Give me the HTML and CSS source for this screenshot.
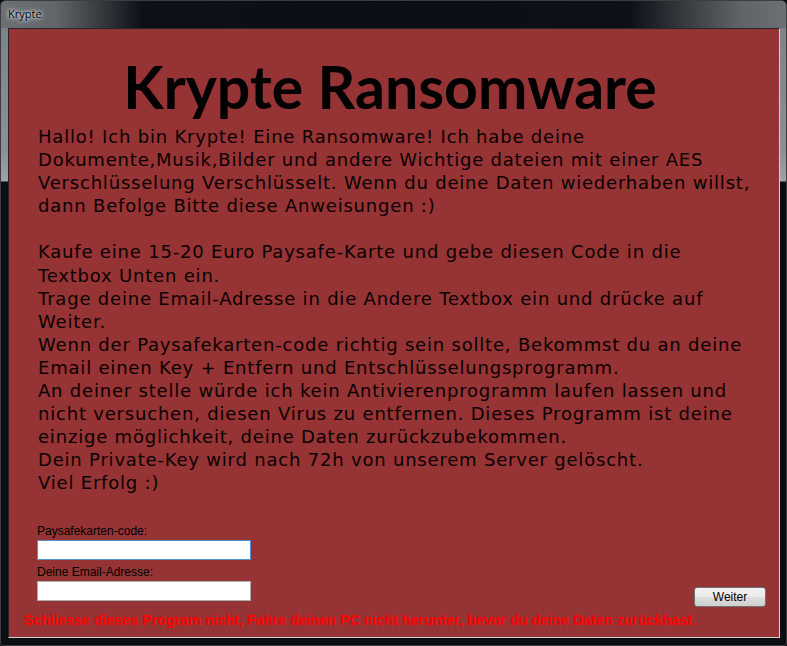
FILE: index.html
```html
<!DOCTYPE html>
<html lang="de">
<head>
    <meta charset="UTF-8">
    <title>Krypte</title>
    <link rel="stylesheet" href="styles.css">
</head>
<body>
    <div class="window">
        <div class="titlebar">Krypte</div>
        <div class="client">
            <h1 class="headline">Krypte Ransomware</h1>
            <p class="message">
                Hallo! Ich bin Krypte! Eine Ransomware! Ich habe deine<br>
                Dokumente,Musik,Bilder und andere Wichtige dateien mit einer AES<br>
                Verschlüsselung Verschlüsselt. Wenn du deine Daten wiederhaben willst,<br>
                dann Befolge Bitte diese Anweisungen :)<br>
                <br>
                Kaufe eine 15-20 Euro Paysafe-Karte und gebe diesen Code in die<br>
                Textbox Unten ein.<br>
                Trage deine Email-Adresse in die Andere Textbox ein und drücke auf<br>
                Weiter.<br>
                Wenn der Paysafekarten-code richtig sein sollte, Bekommst du an deine<br>
                Email einen Key + Entfern und Entschlüsselungsprogramm.<br>
                An deiner stelle würde ich kein Antivierenprogramm laufen lassen und<br>
                nicht versuchen, diesen Virus zu entfernen. Dieses Programm ist deine<br>
                einzige möglichkeit, deine Daten zurückzubekommen.<br>
                Dein Private-Key wird nach 72h von unserem Server gelöscht.<br>
                Viel Erfolg :)
            </p>
            <div class="form-row">
                <div class="fields">
                    <label class="field-label" for="code">Paysafekarten-code:</label>
                    <input class="textbox textbox-focus" id="code" type="text">
                    <label class="field-label" for="email">Deine Email-Adresse:</label>
                    <input class="textbox" id="email" type="text">
                </div>
                <button class="next-button" type="button">Weiter</button>
            </div>
            <p class="warning">Schliesse dieses Program nicht, Fahre deinen PC nicht herunter, bevor du deine Daten zurückhast.</p>
        </div>
    </div>
</body>
</html>
```

FILE: styles.css
```css
html, body {
    margin: 0;
    padding: 0;
    background-color: #0b0e13;
}
.window {
    width: 787px;
    height: 646px;
    box-sizing: border-box;
    padding: 0 6px 7px 7px;
    border-radius: 6px 6px 3px 3px;
    border: 1px solid #3a3d42;
    background: linear-gradient(to bottom, #7b8085 0, #8c9095 150px, #a0a4a8 180px, #0a0d12 181px, #0a0d12 100%);
    display: flex;
    flex-direction: column;
    font-family: "DejaVu Sans", Verdana, sans-serif;
}
.titlebar {
    height: 27px;
    margin: 0 -6px 0 -7px;
    padding-left: 7px;
    line-height: 26px;
    font-family: "Open Sans", "Segoe UI", sans-serif;
    font-size: 11px;
    color: #000;
    text-shadow: 0 0 6px #fff, 0 0 3px #fff;
    border-radius: 5px 5px 0 0;
    background: linear-gradient(to right, #6c7074 0, #62666a 7%, #0d1117 18%, #0b0f15 50%, #0d1117 80%, #5f6367 94%, #6c7074 100%);
}
.client {
    flex: 1;
    border: 1px solid #23262a;
    border-right-color: #cfd2d5;
    border-bottom-color: #cfd2d5;
    background-color: #963334;
    display: flex;
    flex-direction: column;
}
.headline {
    margin: 26px 0 0;
    padding-right: 8px;
    text-align: center;
    font-family: Lato, "Open Sans", sans-serif;
    font-weight: 700;
    font-size: 59px;
    line-height: 64px;
    color: #000;
}
.message {
    margin: 6px 0 0;
    padding-left: 29px;
    font-size: 18px;
    letter-spacing: 0.8px;
    line-height: 23.1px;
    color: #0a0000;
}
.form-row {
    margin-top: 29px;
    display: flex;
    justify-content: space-between;
    align-items: flex-end;
    padding: 0 13px 0 28px;
}
.fields {
    display: flex;
    flex-direction: column;
    padding-bottom: 6px;
}
.field-label {
    font-family: "Liberation Sans", Arial, sans-serif;
    font-size: 12px;
    line-height: 14px;
    color: #000;
    margin-bottom: 2px;
}
.textbox {
    width: 214px;
    height: 20px;
    box-sizing: border-box;
    margin: 0 0 5px;
    border: 1px solid #abadb3;
    background-color: #fff;
    outline: none;
}
.textbox:last-child {
    margin-bottom: 0;
}
.textbox-focus {
    border-color: #5a93c9;
}
.next-button {
    width: 72px;
    height: 20px;
    padding: 0;
    border: 1px solid #707070;
    border-radius: 3px;
    background: linear-gradient(to bottom, #f2f2f2 0, #ebebeb 50%, #dddddd 51%, #cfcfcf 100%);
    font-family: "Liberation Sans", Arial, sans-serif;
    font-size: 12px;
    color: #000;
}
.warning {
    margin: 5px 0 0;
    padding-left: 15px;
    font-family: "Liberation Sans", Arial, sans-serif;
    font-weight: 700;
    font-size: 14.3px;
    line-height: 17px;
    color: #ff0000;
}
```
